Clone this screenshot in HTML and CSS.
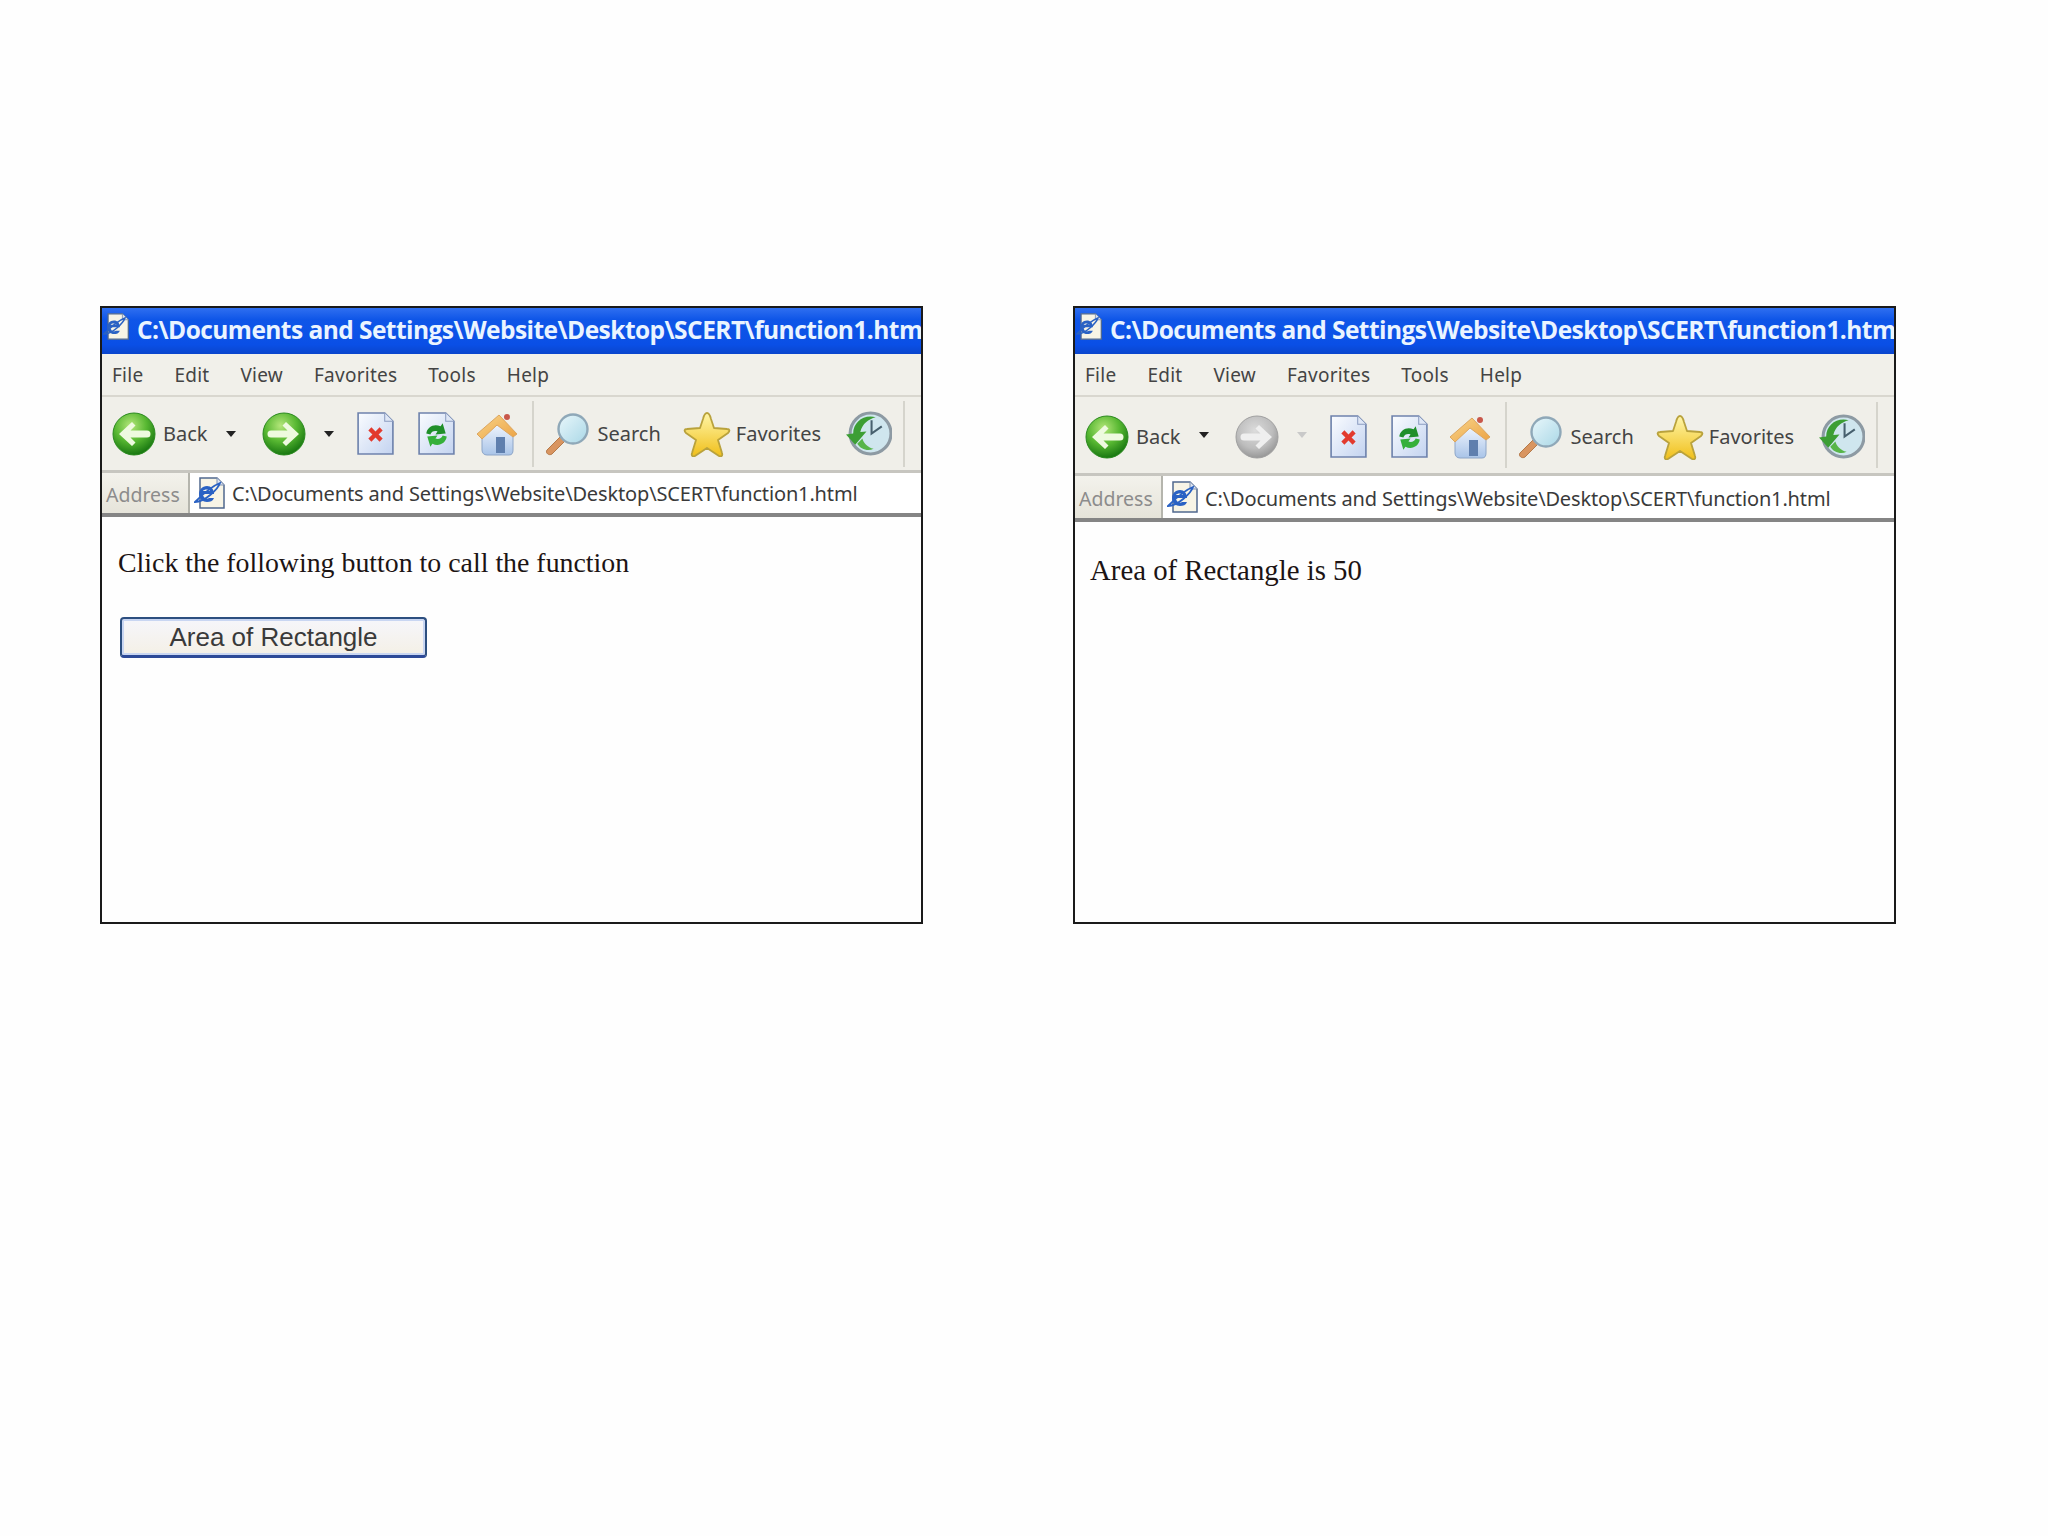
FILE: index.html
```html
<!DOCTYPE html>
<html lang="en">
<head>
<meta charset="utf-8">
<title>Function demo</title>
<link rel="stylesheet" href="styles.css">
</head>
<body>
<svg class="defs" width="0" height="0" aria-hidden="true">
  <defs>
    <radialGradient id="green" cx="42%" cy="30%" r="75%"><stop offset="0" stop-color="#b4e67a"/><stop offset=".5" stop-color="#58b832"/><stop offset="1" stop-color="#0f6e0c"/></radialGradient>
    <radialGradient id="grey" cx="45%" cy="35%" r="70%"><stop offset="0" stop-color="#dcdcdc"/><stop offset=".6" stop-color="#bdbdbd"/><stop offset="1" stop-color="#8f8f8f"/></radialGradient>
    <linearGradient id="paper" x1="0" y1="0" x2="1" y2="1"><stop offset="0" stop-color="#fafcff"/><stop offset="1" stop-color="#c3d3f0"/></linearGradient>
    <linearGradient id="starfill" x1="0" y1="0" x2="0" y2="1"><stop offset="0" stop-color="#fff6a8"/><stop offset="1" stop-color="#f0bf1a"/></linearGradient>
    <linearGradient id="roof" x1="0" y1="0" x2="1" y2="1"><stop offset="0" stop-color="#f8d48a"/><stop offset="1" stop-color="#eca344"/></linearGradient>
    <linearGradient id="wall" x1="0" y1="0" x2="0" y2="1"><stop offset="0" stop-color="#f4f8ff"/><stop offset="1" stop-color="#a9c4e8"/></linearGradient>
    <linearGradient id="lens" x1="0" y1="0" x2="1" y2="1"><stop offset="0" stop-color="#e9f7fb"/><stop offset="1" stop-color="#a9d7e6"/></linearGradient>
    <symbol id="i-back" viewBox="0 0 44 44"><circle cx="22" cy="22" r="21" fill="url(#green)" stroke="#2a8a1e"/><path d="M7 22 20 10l3.500 3.500-5 5H35a3.500 3.500 0 0 1 0 7H18.500l5 5L20 34z" fill="#eefadf"/></symbol>
    <symbol id="i-fwd" viewBox="0 0 44 44"><circle cx="22" cy="22" r="21" fill="url(#green)" stroke="#2a8a1e"/><path d="M37 22 24 10l-3.500 3.500 5 5H9a3.500 3.500 0 0 0 0 7h16.500l-5 5L24 34z" fill="#eefadf"/></symbol>
    <symbol id="i-fwd-off" viewBox="0 0 44 44"><circle cx="22" cy="22" r="21" fill="url(#grey)" stroke="#a0a0a0"/><path d="M37 22 24 10l-3.500 3.500 5 5H9a3.500 3.500 0 0 0 0 7h16.500l-5 5L24 34z" fill="#efefef"/></symbol>
    <symbol id="i-stop" viewBox="0 0 36 42"><path d="M1 1h26l8 8v32H1z" fill="url(#paper)" stroke="#6f83ad" stroke-width="1.600"/><path d="M27 1v8h8" fill="#dfe7f6" stroke="#8a9cc0"/><path d="M11 18l3-3 4 4 4-4 3 3-4 4 4 4-3 3-4-4-4 4-3-3 4-4z" fill="#e23a2e"/></symbol>
    <symbol id="i-refresh" viewBox="0 0 36 42"><path d="M1 1h26l8 8v32H1z" fill="url(#paper)" stroke="#6f83ad" stroke-width="1.600"/><path d="M27 1v8h8" fill="#dfe7f6" stroke="#8a9cc0"/><path d="M8 21c1-7 8-10 14-7l2-3 3 10-10 1 2-3c-3-1-6 0-7 3z" fill="#1f8f2a"/><path d="M28 24c-1 7-8 10-14 7l-2 3-3-10 10-1-2 3c3 1 6 0 7-3z" fill="#35b03a"/></symbol>
    <symbol id="i-home" viewBox="0 0 44 44"><path d="M7 22v16c0 3 2 5 5 5h22c3 0 4-2 4-5V22L24 10z" fill="url(#wall)" stroke="#8ea6c8"/><path d="M2 22 24 3l18 19-4 3-16-12L7 27z" fill="url(#roof)" stroke="#dca660"/><circle cx="32" cy="5" r="3" fill="#c8574a"/><rect x="21" y="25" width="9" height="16" fill="#5f7fae"/></symbol>
    <symbol id="i-search" viewBox="0 0 46 44"><path d="M3 38 17 24l5 4L8 42c-3 2-7-1-5-4z" fill="#d99560" stroke="#b57a4a"/><circle cx="29" cy="17" r="14.500" fill="url(#lens)" stroke="#8fa8b8" stroke-width="2.400"/></symbol>
    <symbol id="i-star" viewBox="0 0 48 46"><path d="M24 2c2 0 3 2 4 6l3 9 13 1c3 0 3 2 1 4L35 29l4 13c1 3-1 4-3 3L24 37l-12 8c-2 1-4 0-3-3l4-13L3 22c-2-2-2-4 1-4l13-1 3-9c1-4 2-6 4-6z" fill="url(#starfill)" stroke="#b9a23c" stroke-width="1.800" stroke-linejoin="round"/></symbol>
    <symbol id="i-history" viewBox="0 0 46 46"><circle cx="25" cy="23" r="20" fill="#cfe6ee" stroke="#8d9aa3" stroke-width="3"/><path d="M26 10v13l10-7" fill="none" stroke="#47606e" stroke-width="2"/><path d="M1 24l9 10 11-13-6 .5C17 13 23 9 30 7 18 4 8 12 8 23z" fill="#3c9e34"/><path d="M12 33c3 5 10 8 16 5-6-1-10-6-11-10z" fill="#58b548"/></symbol>
    <symbol id="i-ie" viewBox="0 0 32 32"><path d="M6 1h17l7 7v23H6z" fill="#f7f4e6" stroke="#50688f" stroke-width="1.500"/><path d="M23 1v7h7" fill="#dde4f2" stroke="#7d90b0"/><path d="M8 17h12c0-5-3-8-7-8-5 0-8 4-8 8 0 5 4 8 8 8 3 0 6-1 7-4h-5c-1 1-4 1-5-1z M9 14c1-2 6-2 7 0z" fill="#2a62c4" fill-rule="evenodd"/><path d="M1 25C6 20 18 9 26 6c-2 6-15 19-25 19z" fill="none" stroke="#2a62c4" stroke-width="1.800"/></symbol>
  </defs>
</svg>

<main class="stage">
  <section class="window">
    <header class="titlebar">
      <svg class="title-icon"><use href="#i-ie"/></svg>
      <span class="title-text">C:\Documents and Settings\Website\Desktop\SCERT\function1.htm</span>
    </header>
    <nav class="menubar"><span>File</span><span>Edit</span><span>View</span><span>Favorites</span><span>Tools</span><span>Help</span></nav>
    <div class="toolbar">
      <svg class="ic ic-nav"><use href="#i-back"/></svg>
      <span class="tb-label tb-back">Back</span>
      <span class="caret caret-back"></span>
      <svg class="ic ic-nav ic-fwd"><use href="#i-fwd"/></svg>
      <span class="caret caret-fwd"></span>
      <svg class="ic ic-doc ic-stop"><use href="#i-stop"/></svg>
      <svg class="ic ic-doc ic-refresh"><use href="#i-refresh"/></svg>
      <svg class="ic ic-home"><use href="#i-home"/></svg>
      <span class="tb-sep"></span>
      <svg class="ic ic-search"><use href="#i-search"/></svg>
      <span class="tb-label tb-search">Search</span>
      <svg class="ic ic-star"><use href="#i-star"/></svg>
      <span class="tb-label tb-fav">Favorites</span>
      <svg class="ic ic-history"><use href="#i-history"/></svg>
      <span class="tb-sep tb-sep-end"></span>
    </div>
    <div class="addressbar">
      <span class="addr-label">Address</span>
      <div class="addr-field">
        <svg class="addr-icon"><use href="#i-ie"/></svg>
        <span class="addr-text">C:\Documents and Settings\Website\Desktop\SCERT\function1.html</span>
      </div>
    </div>
    <div class="page">
      <p class="page-text">Click the following button to call the function</p>
      <button class="area-btn" type="button">Area of Rectangle</button>
    </div>
  </section>

  <section class="window window-result">
    <header class="titlebar">
      <svg class="title-icon"><use href="#i-ie"/></svg>
      <span class="title-text">C:\Documents and Settings\Website\Desktop\SCERT\function1.htm</span>
    </header>
    <nav class="menubar"><span>File</span><span>Edit</span><span>View</span><span>Favorites</span><span>Tools</span><span>Help</span></nav>
    <div class="toolbar">
      <svg class="ic ic-nav"><use href="#i-back"/></svg>
      <span class="tb-label tb-back">Back</span>
      <span class="caret caret-back"></span>
      <svg class="ic ic-nav ic-fwd"><use href="#i-fwd-off"/></svg>
      <span class="caret caret-fwd caret-off"></span>
      <svg class="ic ic-doc ic-stop"><use href="#i-stop"/></svg>
      <svg class="ic ic-doc ic-refresh"><use href="#i-refresh"/></svg>
      <svg class="ic ic-home"><use href="#i-home"/></svg>
      <span class="tb-sep"></span>
      <svg class="ic ic-search"><use href="#i-search"/></svg>
      <span class="tb-label tb-search">Search</span>
      <svg class="ic ic-star"><use href="#i-star"/></svg>
      <span class="tb-label tb-fav">Favorites</span>
      <svg class="ic ic-history"><use href="#i-history"/></svg>
      <span class="tb-sep tb-sep-end"></span>
    </div>
    <div class="addressbar">
      <span class="addr-label">Address</span>
      <div class="addr-field">
        <svg class="addr-icon"><use href="#i-ie"/></svg>
        <span class="addr-text">C:\Documents and Settings\Website\Desktop\SCERT\function1.html</span>
      </div>
    </div>
    <div class="page">
      <p class="page-text">Area of Rectangle is 50</p>
    </div>
  </section>
</main>
</body>
</html>
```
FILE: styles.css
```css
* { box-sizing: border-box; }
html, body { margin: 0; background: #fefefe; }
body { height: 1536px; overflow: hidden; }
.defs { display: block; height: 0; }
.stage { display: flex; gap: 150px; padding: 306px 0 0 100px; }

.window {
  width: 823px;
  height: 618px;
  border: 2px solid #1a1a1a;
  display: flex;
  flex-direction: column;
  background: #fff;
  overflow: hidden;
}

.titlebar {
  height: 46px;
  flex: none;
  display: flex;
  align-items: center;
  gap: 7px;
  padding: 0 0 4px 1px;
  white-space: nowrap;
  overflow: hidden;
  background: linear-gradient(#2f6ff0 0, #0f56e8 25%, #0a4fe6 80%, #0a45cc 100%);
}
.title-icon { width: 27px; height: 33px; flex: none; margin-top: -5px; }
.title-text {
  color: #eaf4ff;
  font: 700 24.5px "Open Sans", "DejaVu Sans", sans-serif;
  letter-spacing: -0.55px;
}

.menubar {
  height: 43px;
  flex: none;
  display: flex;
  align-items: center;
  gap: 31px;
  padding: 0 0 0 10px;
  background: #f1f0ea;
  border-bottom: 2px solid #d9d7cf;
  color: #444;
  font: 19px "Noto Sans", "Open Sans", sans-serif;
  letter-spacing: 0.25px;
}

.toolbar {
  height: 76px;
  flex: none;
  display: flex;
  align-items: center;
  padding-left: 10px;
  background: #f0efe9;
  border-bottom: 3px solid #c7c6c0;
  color: #444;
  font: 20px "Noto Sans", "Open Sans", sans-serif;
}
.ic { flex: none; display: block; }
.ic-nav { width: 44px; height: 44px; }
.ic-doc { width: 37px; height: 43px; }
.ic-home { width: 44px; height: 44px; margin-left: 20px; }
.ic-search { width: 46px; height: 44px; margin-left: 10px; }
.ic-star { width: 48px; height: 46px; margin-left: 22px; }
.ic-history { width: 47px; height: 47px; margin-left: 24px; }
.ic-fwd { margin-left: 26px; }
.ic-stop { margin-left: 23px; }
.ic-refresh { margin-left: 24px; }
.tb-label { flex: none; line-height: 1; }
.tb-back { margin-left: 7px; }
.tb-search { margin-left: 8px; }
.tb-fav { margin-left: 5px; }
.caret { flex: none; width: 0; height: 0; border: 5px solid transparent; border-top: 6px solid #222; border-bottom: 0; }
.caret-back { margin-left: 18px; }
.caret-fwd { margin-left: 18px; }
.caret-off { border-top-color: #c9c9c9; }
.tb-sep { flex: none; width: 2px; height: 66px; margin-left: 13px; background: #d5d4cc; }
.tb-sep-end { margin-left: 11px; }

.addressbar {
  height: 44px;
  flex: none;
  display: flex;
  background: linear-gradient(#f3f2ec, #e6e4da);
  border-bottom: 4px solid #858585;
}
.addr-label {
  width: 86px;
  flex: none;
  padding: 8px 0 0 4px;
  color: #8c8c8c;
  font: 19.5px "Noto Sans", "Open Sans", sans-serif;
}
.addr-field {
  flex: 1;
  display: flex;
  align-items: center;
  gap: 6px;
  padding-left: 4px;
  background: #fff;
  border-left: 2px solid #b5b5ad;
  white-space: nowrap;
  overflow: hidden;
}
.addr-icon { width: 32px; height: 32px; flex: none; }
.addr-text {
  color: #3a3a3a;
  font: 20px "Noto Sans", "Open Sans", sans-serif;
  letter-spacing: -0.15px;
}

.page { flex: 1; padding: 29px 0 0 16px; background: #fefefe; }
.page-text {
  margin: 0;
  color: #1c1414;
  font: 27.85px/34px "Liberation Serif", serif;
}
.area-btn {
  display: block;
  width: 307px;
  height: 41px;
  margin: 37px 0 0 2px;
  padding: 0;
  border: 2px solid #2d4f80;
  border-bottom: 3px solid #2d4a98;
  border-radius: 4px;
  background: linear-gradient(#f6f6fb, #f4f0e6);
  box-shadow: inset 0 0 0 2px #c9d6f2;
  color: #3a3a3a;
  font: 26px "Liberation Sans", sans-serif;
}

.window-result .toolbar { height: 79px; }
.window-result .toolbar .ic, .window-result .toolbar .tb-label { margin-top: 3px; }
.window-result .addressbar { height: 46px; }
.window-result .addr-label { padding-top: 9px; }
.window-result .addr-text { padding-top: 2px; }
.window-result .page { padding: 31px 0 0 15px; }
.window-result .page-text { font-size: 28.8px; }
```
